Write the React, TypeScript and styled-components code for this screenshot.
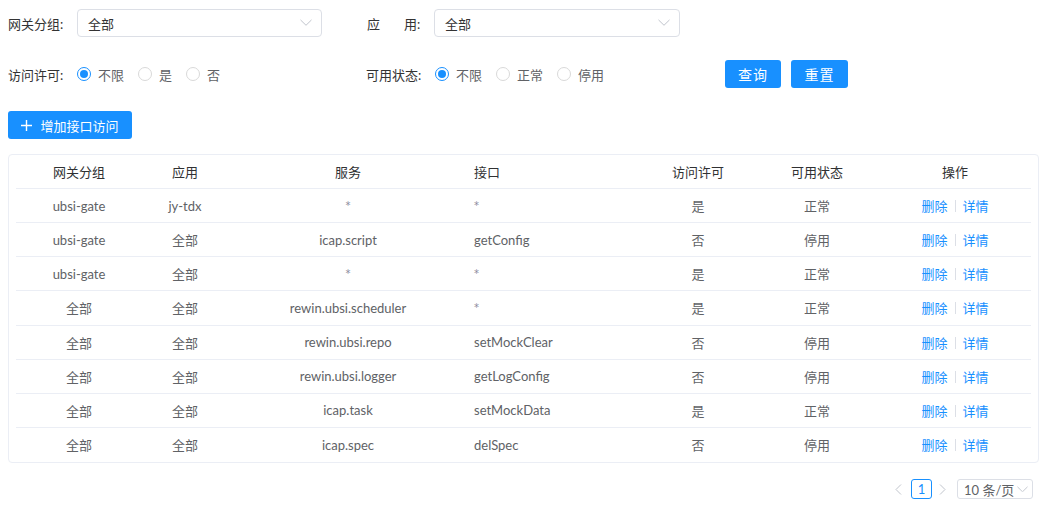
import React from "react";
import styled, { createGlobalStyle } from "styled-components";

const Global = createGlobalStyle`
  html, body { margin: 0; padding: 0; background: #fff; }
  body { font-family: "Lato", "Noto Sans CJK SC", "Noto Sans", sans-serif; font-size: 13px; color: #333; }
  * { box-sizing: border-box; }
`;

const Page = styled.div`
  padding: 9px 8px 0 8px;
  width: 1047px;
`;

const FilterRow = styled.div<{ $mt?: number }>`
  display: flex;
  align-items: center;
  height: 28px;
  margin-top: ${(p) => p.$mt ?? 0}px;
`;

const FormItem = styled.div<{ $ml?: number; $w?: number }>`
  display: flex;
  align-items: center;
  margin-left: ${(p) => p.$ml ?? 0}px;
  width: ${(p) => (p.$w ? `${p.$w}px` : "auto")};
  flex: none;
`;

const Label = styled.div<{ $w: number }>`
  width: ${(p) => p.$w}px;
  color: #333;
  font-size: 13px;
  white-space: nowrap;
  display: flex;
`;

const LabelGap = styled.span`
  display: inline-block;
  width: 24px;
`;

const SelectBox = styled.div<{ $w: number }>`
  width: ${(p) => p.$w}px;
  height: 28px;
  border: 1px solid #dcdfe6;
  border-radius: 4px;
  display: flex;
  align-items: center;
  justify-content: space-between;
  padding: 0 9px 0 10px;
  color: #333;
  font-size: 13px;
`;

const Chevron = ({ color = "#c0c4cc", size = 12 }: { color?: string; size?: number }) => (
  <svg width={size} height={size * 0.6} viewBox="0 0 12 7" fill="none">
    <path d="M0.5 0.8 L6 6.2 L11.5 0.8" stroke={color} strokeWidth="1" />
  </svg>
);

const RadioGroup = styled.div`
  display: flex;
  align-items: center;
`;

const RadioItem = styled.label`
  display: flex;
  align-items: center;
  margin-right: 14px;
  color: #606266;
  font-size: 13px;
`;

const RadioCircle = styled.span<{ $checked?: boolean }>`
  width: 14px;
  height: 14px;
  border-radius: 50%;
  border: 1px solid ${(p) => (p.$checked ? "#1890ff" : "#d9d9d9")};
  display: inline-flex;
  align-items: center;
  justify-content: center;
  margin-right: 7px;
  &::after {
    content: "";
    width: 8px;
    height: 8px;
    border-radius: 50%;
    background: ${(p) => (p.$checked ? "#1890ff" : "transparent")};
  }
`;

const Button = styled.button<{ $w: number; $ml?: number }>`
  width: ${(p) => p.$w}px;
  height: 28px;
  margin-left: ${(p) => p.$ml ?? 0}px;
  background: #1890ff;
  border: none;
  border-radius: 3px;
  color: #fff;
  font-family: "Noto Sans CJK SC", sans-serif;
  font-size: 14px;
  letter-spacing: 1px;
  display: inline-flex;
  align-items: center;
  justify-content: center;
  gap: 8px;
  padding: 0;
  cursor: pointer;
`;

const AddButton = styled(Button)`
  font-size: 13px;
  letter-spacing: 0;
  margin-top: 23px;
`;

const TableBox = styled.div`
  margin-top: 15px;
  width: 1031px;
  border: 1px solid #ebeef5;
  border-radius: 4px;
  padding: 0 7px;
`;

const cols = "126px 86px 240px 172px 116px 122px 154px";

const Row = styled.div<{ $head?: boolean; $last?: boolean }>`
  display: grid;
  grid-template-columns: ${cols};
  height: ${(p) => (p.$head ? "34px" : "34.125px")};
  align-items: center;
  border-bottom: ${(p) => (p.$last ? "none" : "1px solid #ebeef5")};
  color: ${(p) => (p.$head ? "#303133" : "#606266")};
  font-size: 13px;
`;

const Cell = styled.div<{ $left?: boolean }>`
  text-align: ${(p) => (p.$left ? "left" : "center")};
  padding-left: ${(p) => (p.$left ? "6px" : "0")};
  white-space: nowrap;
`;

const Star = styled.span`
  display: inline-block;
  font-family: "DejaVu Sans", sans-serif;
  font-size: 10px;
  color: #8a8a9c;
  transform: translateY(-2px);
`;

const Link = styled.span`
  color: #1890ff;
`;

const Sep = styled.span`
  display: inline-block;
  width: 1px;
  height: 12px;
  background: #dcdfe6;
  margin: 0 7px;
  vertical-align: -1px;
`;

const Pager = styled.div`
  display: flex;
  justify-content: flex-end;
  align-items: center;
  margin-top: 16px;
  width: 1025px;
`;

const PagerArrow = styled.span`
  width: 20px;
  display: inline-flex;
  justify-content: center;
  align-items: center;
`;

const PageNum = styled.span`
  width: 21px;
  height: 20px;
  border: 1px solid #1890ff;
  border-radius: 3px;
  color: #1890ff;
  font-size: 13px;
  display: inline-flex;
  align-items: center;
  justify-content: center;
  margin-left: 3px;
`;

const SizeSelect = styled.div`
  width: 76px;
  height: 20px;
  border: 1px solid #dcdfe6;
  border-radius: 3px;
  margin-left: 5px;
  display: flex;
  align-items: center;
  justify-content: space-between;
  padding: 0 4px 0 6px;
  color: #606266;
  font-size: 13px;
`;

const ArrowIcon = ({ dir }: { dir: "l" | "r" }) => (
  <svg width="7" height="11" viewBox="0 0 7 11" fill="none">
    <path d={dir === "l" ? "M6 0.5 L1 5.5 L6 10.5" : "M1 0.5 L6 5.5 L1 10.5"} stroke="#c0c4cc" strokeWidth="1" />
  </svg>
);

const PlusIcon = () => (
  <svg width="11" height="11" viewBox="0 0 11 11">
    <path d="M5.5 0 V11 M0 5.5 H11" stroke="#fff" strokeWidth="1.4" />
  </svg>
);

type R = { g: string; a: string; s: string; i: string; p: string; st: string };
const data: R[] = [
  { g: "ubsi-gate", a: "jy-tdx", s: "*", i: "*", p: "是", st: "正常" },
  { g: "ubsi-gate", a: "全部", s: "icap.script", i: "getConfig", p: "否", st: "停用" },
  { g: "ubsi-gate", a: "全部", s: "*", i: "*", p: "是", st: "正常" },
  { g: "全部", a: "全部", s: "rewin.ubsi.scheduler", i: "*", p: "是", st: "正常" },
  { g: "全部", a: "全部", s: "rewin.ubsi.repo", i: "setMockClear", p: "否", st: "停用" },
  { g: "全部", a: "全部", s: "rewin.ubsi.logger", i: "getLogConfig", p: "否", st: "停用" },
  { g: "全部", a: "全部", s: "icap.task", i: "setMockData", p: "是", st: "正常" },
  { g: "全部", a: "全部", s: "icap.spec", i: "delSpec", p: "否", st: "停用" },
];

const txt = (v: string) => (v === "*" ? <Star>*</Star> : v);

export default function App() {
  return (
    <Page>
      <Global />
      <FilterRow>
        <FormItem $w={314}>
          <Label $w={69}>网关分组:</Label>
          <SelectBox $w={245}>
            <span>全部</span>
            <Chevron />
          </SelectBox>
        </FormItem>
        <FormItem $ml={45}>
          <Label $w={67}>
            应<LabelGap />用:
          </Label>
          <SelectBox $w={246}>
            <span>全部</span>
            <Chevron />
          </SelectBox>
        </FormItem>
      </FilterRow>

      <FilterRow $mt={23}>
        <FormItem $w={314}>
          <Label $w={69}>访问许可:</Label>
          <RadioGroup>
            <RadioItem>
              <RadioCircle $checked />
              不限
            </RadioItem>
            <RadioItem>
              <RadioCircle />是
            </RadioItem>
            <RadioItem>
              <RadioCircle />否
            </RadioItem>
          </RadioGroup>
        </FormItem>
        <FormItem $ml={44} $w={315}>
          <Label $w={69}>可用状态:</Label>
          <RadioGroup>
            <RadioItem>
              <RadioCircle $checked />
              不限
            </RadioItem>
            <RadioItem>
              <RadioCircle />
              正常
            </RadioItem>
            <RadioItem>
              <RadioCircle />
              停用
            </RadioItem>
          </RadioGroup>
        </FormItem>
        <FormItem $ml={44}>
          <Button $w={56}>查询</Button>
          <Button $w={57} $ml={10}>重置</Button>
        </FormItem>
      </FilterRow>

      <AddButton $w={124}>
        <PlusIcon />
        增加接口访问
      </AddButton>

      <TableBox>
        <Row $head>
          <Cell>网关分组</Cell>
          <Cell>应用</Cell>
          <Cell>服务</Cell>
          <Cell $left>接口</Cell>
          <Cell>访问许可</Cell>
          <Cell>可用状态</Cell>
          <Cell>操作</Cell>
        </Row>
        {data.map((r, idx) => (
          <Row key={idx} $last={idx === data.length - 1}>
            <Cell>{r.g}</Cell>
            <Cell>{r.a}</Cell>
            <Cell>{txt(r.s)}</Cell>
            <Cell $left>{txt(r.i)}</Cell>
            <Cell>{r.p}</Cell>
            <Cell>{r.st}</Cell>
            <Cell>
              <Link>删除</Link>
              <Sep />
              <Link>详情</Link>
            </Cell>
          </Row>
        ))}
      </TableBox>

      <Pager>
        <PagerArrow>
          <ArrowIcon dir="l" />
        </PagerArrow>
        <PageNum>1</PageNum>
        <PagerArrow>
          <ArrowIcon dir="r" />
        </PagerArrow>
        <SizeSelect>
          <span>10 条/页</span>
          <Chevron size={11} />
        </SizeSelect>
      </Pager>
    </Page>
  );
}
